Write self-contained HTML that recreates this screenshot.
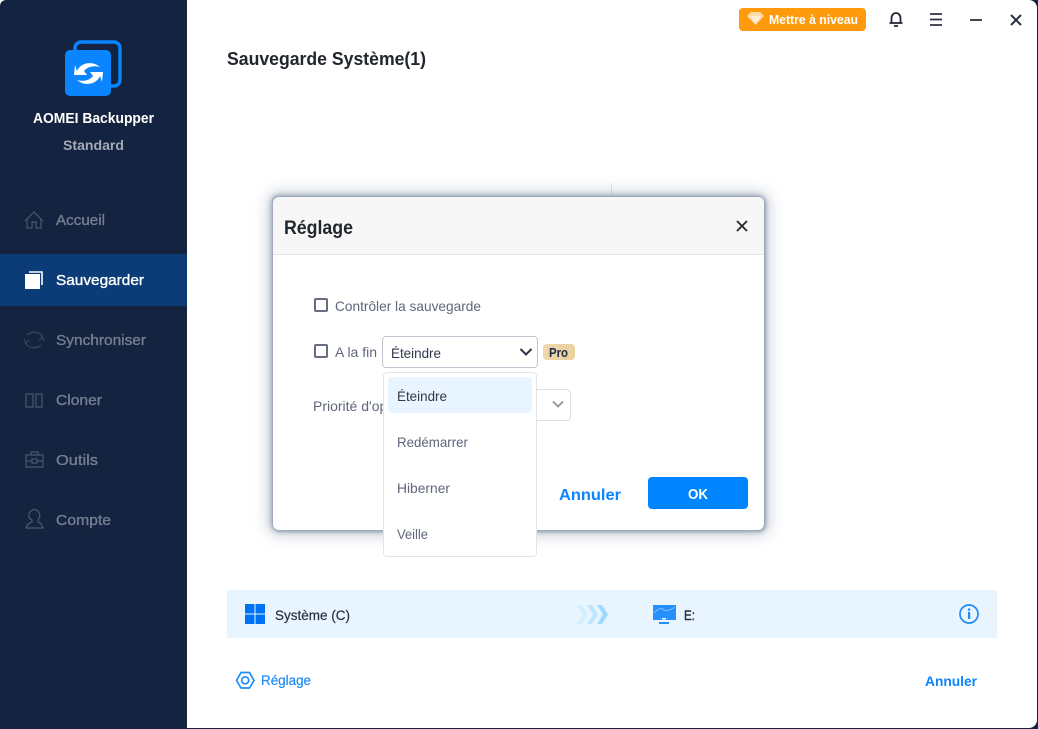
<!DOCTYPE html>
<html lang="fr"><head><meta charset="utf-8"><title>AOMEI Backupper</title>
<style>
html,body{margin:0;padding:0;background:#fff}
body{width:1038px;height:729px;overflow:hidden;position:relative;font-family:"Liberation Sans",sans-serif}
.b{position:absolute;box-sizing:border-box}
svg{position:absolute;left:0;top:0}
text{font-family:"Liberation Sans",sans-serif}
</style></head><body>
<div class="b" style="left:0;top:0;width:1038px;height:729px;background:#14233f"></div>
<div class="b" style="left:0;top:0;width:1037px;height:728px;background:#fff;border-radius:0 8px 8px 0"></div>
<div class="b" style="left:0;top:0;width:187px;height:729px;background:#14233f;border-radius:6px 0 0 0"></div>
<div class="b" style="left:0;top:254px;width:187px;height:52px;background:#0b3c77"></div>
<div class="b" style="left:739px;top:8px;width:127px;height:23px;background:#ff9a0c;border-radius:4px"></div>
<div class="b" style="left:611px;top:183px;width:1px;height:16px;background:#e2e5ea"></div>
<div class="b" style="left:273px;top:197px;width:491px;height:333px;background:#fff;border-radius:6px;box-shadow:-1px -1px 1px #9ea9b7,1px 1px 2px #98a4b3,0 0 5px 2px rgba(130,145,165,.7),0 0 14px 6px rgba(140,155,175,.4)"></div>
<div class="b" style="left:273px;top:197px;width:491px;height:58px;background:#f7f7f7;border-bottom:1px solid #e3e5e8;border-radius:6px 6px 0 0"></div>
<div class="b" style="left:314px;top:298px;width:14px;height:14px;border:2px solid #666d80;border-radius:2px"></div>
<div class="b" style="left:314px;top:344px;width:14px;height:14px;border:2px solid #666d80;border-radius:2px"></div>
<div class="b" style="left:382px;top:336px;width:156px;height:32px;border:1px solid #c0c4d0;border-radius:4px;background:#fff"></div>
<div class="b" style="left:543px;top:344px;width:32px;height:16px;border-radius:4px;background:linear-gradient(90deg,#f0d6ae,#e8d29c)"></div>
<div class="b" style="left:480px;top:389px;width:91px;height:32px;border:1px solid #dcdfe5;border-radius:4px;background:#fff"></div>
<div class="b" style="left:648px;top:477px;width:100px;height:32px;background:#0085ff;border-radius:4px"></div>
<div class="b" style="left:227px;top:590px;width:770px;height:48px;background:#e8f4fe"></div>

<svg width="1038" height="729" viewBox="0 0 1038 729">
<!-- logo -->
<rect x="75" y="42" width="45" height="44" rx="6" fill="none" stroke="#0a84ff" stroke-width="3.4"/>
<rect x="65" y="50" width="46" height="46" rx="5" fill="#0a84ff"/>
<path d="M77 71 C80 63 92 60 100 67 C93 65 87 67 84 71 L87 75 L74 75 L75 65 Z" fill="#fff"/>
<path d="M100 76 C97 84 85 87 77 80 C84 82 90 80 93 76 L90 72 L103 72 L102 82 Z" fill="#fff"/>
<text x="33" y="123" font-size="14.500" font-weight="700" fill="#fff" textLength="121" lengthAdjust="spacingAndGlyphs">AOMEI Backupper</text>
<text x="63" y="150" font-size="13.500" font-weight="700" fill="#a3a9b5" textLength="61" lengthAdjust="spacingAndGlyphs">Standard</text>
<!-- nav icons -->
<g fill="none" stroke="#4c566c" stroke-width="1.200">
<path d="M25 221 L34 212 L43 221 M27 219 V228 H32 V222 H36 V228 H41 V219"/>
<path d="M43 337 A10 9 0 0 0 27 335 M25 343 A10 9 0 0 0 41 345 M24 339 L26 343 L29 340 M44 341 L42 337 L39 340" stroke="#3a455d"/>
<path d="M26 394 H33 V407 H26 Z M36 394 H42 V407 H36 Z"/>
<path d="M26 455 H43 V467 H26 Z M31 455 V452 H38 V455 M26 461 H32 M37 461 H43 M32 459 H37 V463 H32 Z"/>
<path d="M29 517 A5.500 6 0 1 1 38 520 V522 C41 523 42 525 43 528 H26 C27 525 29 523 32 522 V520 A5 5 0 0 1 29 517 Z"/>
</g>
<rect x="25" y="274" width="15" height="15" fill="#fff"/>
<path d="M29 272 H42 V285" fill="none" stroke="#fff" stroke-width="1.600"/>
<g font-size="14.500" fill="#747d92" stroke="#747d92" stroke-width=".35">
<text x="56" y="225" textLength="49" lengthAdjust="spacingAndGlyphs">Accueil</text>
<text x="56" y="285" fill="#fff" stroke="#fff" textLength="88" lengthAdjust="spacingAndGlyphs">Sauvegarder</text>
<text x="56" y="345" textLength="90" lengthAdjust="spacingAndGlyphs">Synchroniser</text>
<text x="56" y="405" textLength="46" lengthAdjust="spacingAndGlyphs">Cloner</text>
<text x="56" y="465" textLength="42" lengthAdjust="spacingAndGlyphs">Outils</text>
<text x="56" y="525" textLength="55" lengthAdjust="spacingAndGlyphs">Compte</text>
</g>
<!-- top bar -->
<path d="M747 16 L751 12 H760 L764 16 L755.500 25 Z" fill="#ffdca6"/>
<path d="M750 16 H761 L755.500 24 Z" fill="#ffeed4"/>
<text x="769" y="24" font-size="12.500" font-weight="700" fill="#fff" textLength="89" lengthAdjust="spacingAndGlyphs">Mettre à niveau</text>
<path d="M889.500 23 H902.500 M891.500 22.500 V18 A4.500 5 0 0 1 900.500 18 V22.500 M894 26 H898" fill="none" stroke="#20283a" stroke-width="1.800"/>
<path d="M930 14 H942 M930 19.500 H942 M930 25 H942" fill="none" stroke="#2a3040" stroke-width="1.800"/>
<path d="M970 20 H982" stroke="#2a3040" stroke-width="1.800"/>
<path d="M1011 15 L1021 25 M1021 15 L1011 25" stroke="#2a3040" stroke-width="2"/>
<text x="227" y="65" font-size="18" font-weight="700" fill="#22262e" textLength="199" lengthAdjust="spacingAndGlyphs">Sauvegarde Système(1)</text>
<!-- modal -->
<text x="284" y="234" font-size="19" font-weight="700" fill="#22262e" textLength="69" lengthAdjust="spacingAndGlyphs">Réglage</text>
<path d="M737 221 L747 231 M747 221 L737 231" stroke="#2a2a30" stroke-width="1.900"/>
<text x="335" y="311" font-size="14" fill="#5f667a" textLength="146" lengthAdjust="spacingAndGlyphs">Contrôler la sauvegarde</text>
<text x="335" y="357" font-size="14" fill="#5f667a" textLength="42" lengthAdjust="spacingAndGlyphs">A la fin</text>
<text x="391" y="358" font-size="14" fill="#33384a" textLength="50" lengthAdjust="spacingAndGlyphs">Éteindre</text>
<path d="M520.500 349 L526 354.500 L531.500 349" fill="none" stroke="#2a3245" stroke-width="2"/>
<text x="549" y="357" font-size="12.500" font-weight="700" fill="#1f2a44" textLength="19" lengthAdjust="spacingAndGlyphs">Pro</text>
<text x="313" y="411" font-size="14" fill="#5f667a">Priorité d'opération</text>
<path d="M553 401.500 L558 406.500 L563 401.500" fill="none" stroke="#8b929c" stroke-width="1.800"/>
<text x="559" y="500" font-size="16" font-weight="700" fill="#0a84ff" textLength="62" lengthAdjust="spacingAndGlyphs">Annuler</text>
<text x="688" y="499" font-size="14.500" font-weight="700" fill="#fff" textLength="20" lengthAdjust="spacingAndGlyphs">OK</text>
<!-- bottom bar -->
<g fill="#0073f5">
<rect x="245" y="604" width="9.500" height="9.500"/><rect x="255.500" y="604" width="9.500" height="9.500"/>
<rect x="245" y="614.500" width="9.500" height="9.500"/><rect x="255.500" y="614.500" width="9.500" height="9.500"/>
</g>
<text x="275" y="620" font-size="14" fill="#2a3040" stroke="#2a3040" stroke-width=".2" textLength="75" lengthAdjust="spacingAndGlyphs">Système (C)</text>
<path d="M577 605 H582 L588 614.500 L582 624 H577 L583 614.500 Z" fill="#d3efff"/>
<path d="M587 605 H592 L598 614.500 L592 624 H587 L593 614.500 Z" fill="#bfe6ff"/>
<path d="M597 605 H602 L608 614.500 L602 624 H597 L603 614.500 Z" fill="#9edaff"/>
<rect x="653" y="605" width="23" height="15" fill="#2590fb"/>
<path d="M654 613 Q660 606 664 610 Q668 612 675 607" fill="none" stroke="#7dbfff" stroke-width="1"/>
<rect x="662" y="618" width="4" height="1.500" fill="#fff"/>
<rect x="659" y="622" width="10" height="2" fill="#2590fb"/>
<text x="684" y="620" font-size="14" fill="#2a3040" stroke="#2a3040" stroke-width=".4" textLength="11" lengthAdjust="spacingAndGlyphs">E:</text>
<circle cx="969" cy="614" r="9" fill="none" stroke="#1d8cf8" stroke-width="1.700"/>
<rect x="968" y="612" width="2.200" height="7" fill="#1d8cf8"/><rect x="968" y="608.500" width="2.200" height="2.200" fill="#1d8cf8"/>
<path d="M241 672.500 H249.500 L254 680.500 L249.500 688 H241 L236.500 680.500 Z" fill="none" stroke="#1d8cf8" stroke-width="1.700" stroke-linejoin="round"/>
<circle cx="245.200" cy="680.300" r="3.500" fill="none" stroke="#1d8cf8" stroke-width="1.700"/>
<text x="261" y="685" font-size="14" fill="#1d8cf8" stroke="#1d8cf8" stroke-width=".2" textLength="50" lengthAdjust="spacingAndGlyphs">Réglage</text>
<text x="925" y="686" font-size="14" font-weight="700" fill="#0a84ff" textLength="52" lengthAdjust="spacingAndGlyphs">Annuler</text>
</svg>

<!-- dropdown -->
<div class="b" style="left:383px;top:372px;width:154px;height:185px;border:1px solid #e2e4e8;border-radius:4px;background:#fff"></div>
<div class="b" style="left:388px;top:377px;width:144px;height:36px;background:#e8f4ff;border-radius:4px"></div>
<svg width="1038" height="729" viewBox="0 0 1038 729" style="pointer-events:none">
<g font-size="14" fill="#5f667a">
<text x="397" y="401" fill="#33384a" textLength="50" lengthAdjust="spacingAndGlyphs">Éteindre</text>
<text x="397" y="447" textLength="71" lengthAdjust="spacingAndGlyphs">Redémarrer</text>
<text x="397" y="493" textLength="53" lengthAdjust="spacingAndGlyphs">Hiberner</text>
<text x="397" y="539" textLength="31" lengthAdjust="spacingAndGlyphs">Veille</text>
</g>
</svg>
</body></html>
